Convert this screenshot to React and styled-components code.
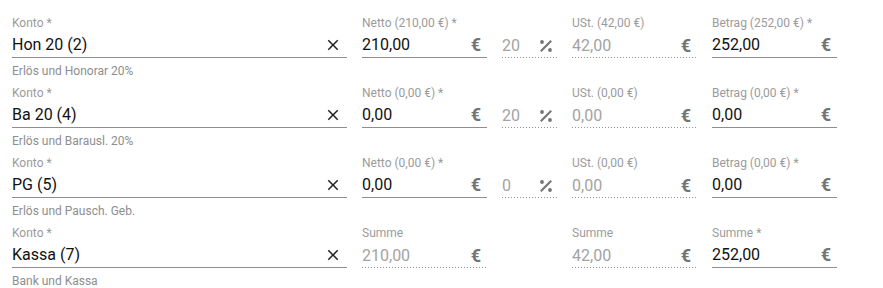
import React from "react";
import styled, { createGlobalStyle, css } from "styled-components";

const GlobalStyle = createGlobalStyle`
  html, body { margin: 0; padding: 0; background: #fff; }
  body { font-family: Roboto, "Noto Sans", "Liberation Sans", sans-serif; }
`;

const Page = styled.div`
  padding: 15px 0 0 12px;
  display: flex;
  flex-direction: column;
`;

const Row = styled.div`
  display: grid;
  grid-template-columns: 335px 125px 55px 125px 125px;
  column-gap: 15px;
  height: 70px;
  align-items: start;
`;

const Field = styled.div`
  display: flex;
  flex-direction: column;
  min-width: 0;
`;

const Label = styled.div`
  font-size: 12px;
  line-height: 16px;
  height: 16px;
  color: #9b9b9b;
  white-space: nowrap;
`;

const InputLine = styled.div`
  margin-top: 2px;
  height: 24px;
  display: flex;
  align-items: center;
  padding-bottom: 0;
  ${(p) =>
    p.$disabled
      ? css`
          background-image: linear-gradient(
            to right,
            rgba(0, 0, 0, 0.42) 33%,
            transparent 0%
          );
          background-position: left bottom;
          background-size: 3px 1px;
          background-repeat: repeat-x;
          height: 25px;
        `
      : css`
          border-bottom: 1px solid #8e8e8e;
        `}
`;

const Value = styled.span`
  flex: 1;
  font-size: 16px;
  line-height: 24px;
  color: ${(p) => (p.$disabled ? "#a3a3a3" : "#111")};
  white-space: nowrap;
  overflow: hidden;
`;

const Euro = styled.span`
  font-size: 18px;
  font-weight: 700;
  line-height: 24px;
  color: #747474;
  margin-right: 6px;
`;

const IconBox = styled.span`
  display: flex;
  align-items: center;
  margin-right: ${(p) => p.$mr || 0}px;
`;

const Helper = styled.div`
  margin-top: 5px;
  font-size: 12px;
  line-height: 16px;
  color: #8e8e8e;
  white-space: nowrap;
`;

const CloseIcon = () => (
  <svg width="18" height="18" viewBox="0 0 24 24">
    <path
      fill="#222"
      d="M19 6.41 17.59 5 12 10.59 6.41 5 5 6.41 10.59 12 5 17.59 6.41 19 12 13.41 17.59 19 19 17.59 13.41 12z"
    />
  </svg>
);

const PercentIcon = () => (
  <svg width="14" height="14" viewBox="0 0 14 14">
    <circle cx="3" cy="3" r="1.9" fill="#747474" />
    <circle cx="11" cy="11" r="1.9" fill="#747474" />
    <line x1="1.8" y1="12.2" x2="12.2" y2="1.8" stroke="#747474" strokeWidth="2.1" />
  </svg>
);

const rows = [
  {
    konto: "Hon 20 (2)",
    helper: "Erlös und Honorar 20%",
    netLabel: "Netto (210,00 €) *",
    net: "210,00",
    pct: "20",
    taxLabel: "USt. (42,00 €)",
    tax: "42,00",
    grossLabel: "Betrag (252,00 €) *",
    gross: "252,00",
  },
  {
    konto: "Ba 20 (4)",
    helper: "Erlös und Barausl. 20%",
    netLabel: "Netto (0,00 €) *",
    net: "0,00",
    pct: "20",
    taxLabel: "USt. (0,00 €)",
    tax: "0,00",
    grossLabel: "Betrag (0,00 €) *",
    gross: "0,00",
  },
  {
    konto: "PG (5)",
    helper: "Erlös und Pausch. Geb.",
    netLabel: "Netto (0,00 €) *",
    net: "0,00",
    pct: "0",
    taxLabel: "USt. (0,00 €)",
    tax: "0,00",
    grossLabel: "Betrag (0,00 €) *",
    gross: "0,00",
  },
  {
    konto: "Kassa (7)",
    helper: "Bank und Kassa",
    netLabel: "Summe",
    net: "210,00",
    netDisabled: true,
    pct: null,
    taxLabel: "Summe",
    tax: "42,00",
    grossLabel: "Summe *",
    gross: "252,00",
  },
];

const KontoField = ({ value, helper }) => (
  <Field>
    <Label>Konto *</Label>
    <InputLine>
      <Value>{value}</Value>
      <IconBox $mr={5}>
        <CloseIcon />
      </IconBox>
    </InputLine>
    <Helper>{helper}</Helper>
  </Field>
);

const MoneyField = ({ label, value, disabled }) => (
  <Field>
    <Label>{label}</Label>
    <InputLine $disabled={disabled}>
      <Value $disabled={disabled}>{value}</Value>
      <Euro>€</Euro>
    </InputLine>
  </Field>
);

const PercentField = ({ value }) => (
  <Field>
    <Label />
    <InputLine $disabled>
      <Value $disabled>{value}</Value>
      <IconBox $mr={4}>
        <PercentIcon />
      </IconBox>
    </InputLine>
  </Field>
);

export default function App() {
  return (
    <>
      <GlobalStyle />
      <Page>
        {rows.map((r, i) => (
          <Row key={i}>
            <KontoField value={r.konto} helper={r.helper} />
            <MoneyField label={r.netLabel} value={r.net} disabled={r.netDisabled} />
            {r.pct !== null ? <PercentField value={r.pct} /> : <Field />}
            <MoneyField label={r.taxLabel} value={r.tax} disabled />
            <MoneyField label={r.grossLabel} value={r.gross} />
          </Row>
        ))}
      </Page>
    </>
  );
}
